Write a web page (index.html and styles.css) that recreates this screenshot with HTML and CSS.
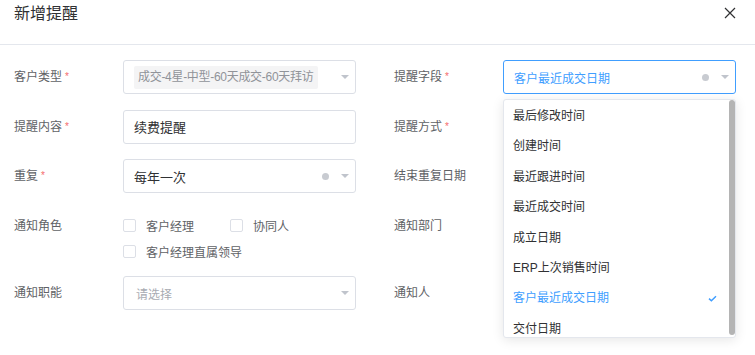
FILE: index.html
```html
<!DOCTYPE html>
<html lang="zh-CN">
<head>
    <meta charset="UTF-8">
    <title>新增提醒</title>
    <link rel="stylesheet" href="styles.css">
</head>
<body>
    <div class="dialog">
        <div class="dialog-header">
            <span class="dialog-title">新增提醒</span>
            <button class="close-btn" aria-label="关闭">
                <svg width="12" height="12" viewBox="0 0 12 12"><path d="M1 1L11 11M11 1L1 11" stroke="#303133" stroke-width="1.2" fill="none"/></svg>
            </button>
        </div>

        <div class="form">
            <div class="row">
                <div class="field">
                    <label class="label">客户类型<i class="req">*</i></label>
                    <div class="select">
                        <span class="tag">成交-4星-中型-60天成交-60天拜访</span>
                        <span class="icons"><span class="arrow"></span></span>
                    </div>
                </div>
                <div class="field">
                    <label class="label">提醒字段<i class="req">*</i></label>
                    <div class="select is-focus">
                        <span class="value blue">客户最近成交日期</span>
                        <span class="icons"><span class="clear"></span><span class="arrow"></span></span>
                    </div>
                </div>
            </div>

            <div class="row">
                <div class="field">
                    <label class="label">提醒内容<i class="req">*</i></label>
                    <div class="select">
                        <span class="value dark">续费提醒</span>
                    </div>
                </div>
                <div class="field">
                    <label class="label">提醒方式<i class="req">*</i></label>
                </div>
            </div>

            <div class="row">
                <div class="field">
                    <label class="label">重复<i class="req">*</i></label>
                    <div class="select">
                        <span class="value dark">每年一次</span>
                        <span class="icons"><span class="clear"></span><span class="arrow"></span></span>
                    </div>
                </div>
                <div class="field">
                    <label class="label">结束重复日期</label>
                </div>
            </div>

            <div class="row row-check">
                <div class="field">
                    <label class="label">通知角色</label>
                    <div class="checks">
                        <div class="check-line">
                            <span class="check"><span class="box"></span>客户经理</span>
                            <span class="check"><span class="box"></span>协同人</span>
                        </div>
                        <div class="check-line">
                            <span class="check"><span class="box"></span>客户经理直属领导</span>
                        </div>
                    </div>
                </div>
                <div class="field">
                    <label class="label">通知部门</label>
                </div>
            </div>

            <div class="row">
                <div class="field">
                    <label class="label">通知职能</label>
                    <div class="select">
                        <span class="value placeholder">请选择</span>
                        <span class="icons"><span class="arrow"></span></span>
                    </div>
                </div>
                <div class="field">
                    <label class="label">通知人</label>
                </div>
            </div>
        </div>

        <div class="dropdown">
            <ul class="options">
                <li>最后修改时间</li>
                <li>创建时间</li>
                <li>最近跟进时间</li>
                <li>最近成交时间</li>
                <li>成立日期</li>
                <li>ERP上次销售时间</li>
                <li class="selected">客户最近成交日期<svg class="tick" width="9" height="7" viewBox="0 0 9 7"><path d="M1 3.6L3.4 5.8L8 1.2" stroke="#409eff" stroke-width="1.5" fill="none"/></svg></li>
                <li>交付日期</li>
            </ul>
            <div class="scrollbar"></div>
        </div>
    </div>
</body>
</html>
```

FILE: styles.css
```css
* {
    margin: 0;
    padding: 0;
    box-sizing: border-box;
}

body {
    font-family: "Liberation Sans", "Noto Sans CJK SC", sans-serif;
    background: #fff;
    color: #606266;
    width: 755px;
    height: 355px;
    overflow: hidden;
}

.dialog {
    position: relative;
    height: 355px;
}

.dialog-header {
    height: 45px;
    border-bottom: 1px solid #e4e7ed;
    display: flex;
    justify-content: space-between;
    padding: 0 19px 0 14px;
}

.dialog-title {
    font-size: 16px;
    line-height: 27px;
    color: #303133;
}

.close-btn {
    border: none;
    background: none;
    height: 26px;
    display: flex;
    align-items: center;
}

.form {
    padding: 15px 0 0 14px;
}

.row {
    display: flex;
    gap: 38px;
    margin-bottom: 15.5px;
}

.row-check {
    margin-bottom: 11.5px;
}

.field {
    display: flex;
    width: 342px;
}

.label {
    width: 109px;
    flex: none;
    font-size: 12px;
    line-height: 34px;
    color: #606266;
}

.row-check .label {
    line-height: 26px;
    padding-top: 4px;
}

.req {
    font-style: normal;
    color: #f56c6c;
    font-size: 10px;
    margin-left: 3px;
    vertical-align: 1px;
}

.select {
    width: 233px;
    height: 34px;
    border: 1px solid #dcdfe6;
    border-radius: 3px;
    display: flex;
    align-items: center;
    padding: 0 6px 0 10px;
}

.select.is-focus {
    border-color: #409eff;
}

.value {
    font-size: 12px;
    flex: 1;
}

.value.dark {
    font-size: 13px;
    color: #303133;
}

.value.blue {
    color: #409eff;
}

.value.placeholder {
    color: #a8abb2;
    padding-left: 2px;
}

.tag {
    background: #f4f4f5;
    color: #909399;
    font-size: 12px;
    letter-spacing: -0.3px;
    height: 23px;
    line-height: 23px;
    padding: 0 5px 0 4px;
    border-radius: 2px;
    margin-right: auto;
}

.icons {
    display: flex;
    align-items: center;
    gap: 12px;
}

.clear {
    width: 7px;
    height: 7px;
    border-radius: 50%;
    background: #c8cbd1;
}

.arrow {
    width: 0;
    height: 0;
    border-left: 4px solid transparent;
    border-right: 4px solid transparent;
    border-top: 4px solid #c0c4cc;
}

.checks {
    padding-top: 4px;
}

.check-line {
    height: 26px;
    display: flex;
    align-items: center;
}

.check {
    display: flex;
    align-items: center;
    font-size: 12px;
    color: #606266;
    margin-right: 36px;
}

.box {
    width: 13px;
    height: 13px;
    border: 1px solid #dcdfe6;
    border-radius: 2px;
    margin-right: 10px;
    background: #fff;
}

.dropdown {
    position: absolute;
    left: 503px;
    top: 99px;
    width: 233px;
    height: 239px;
    border: 1px solid #e4e7ed;
    border-radius: 3px;
    background: #fff;
    box-shadow: 0 2px 12px rgba(0, 0, 0, 0.1);
    overflow: hidden;
}

.options {
    list-style: none;
    padding-top: 1px;
}

.options li {
    height: 30.4px;
    line-height: 30.4px;
    padding: 0 18px 0 9px;
    font-size: 12px;
    color: #303133;
    display: flex;
    align-items: center;
    justify-content: space-between;
}

.options li.selected {
    color: #409eff;
}

.scrollbar {
    position: absolute;
    right: 0;
    top: 0;
    width: 6px;
    height: 235px;
    border-radius: 3px;
    background: #b4b4b4;
}
```
